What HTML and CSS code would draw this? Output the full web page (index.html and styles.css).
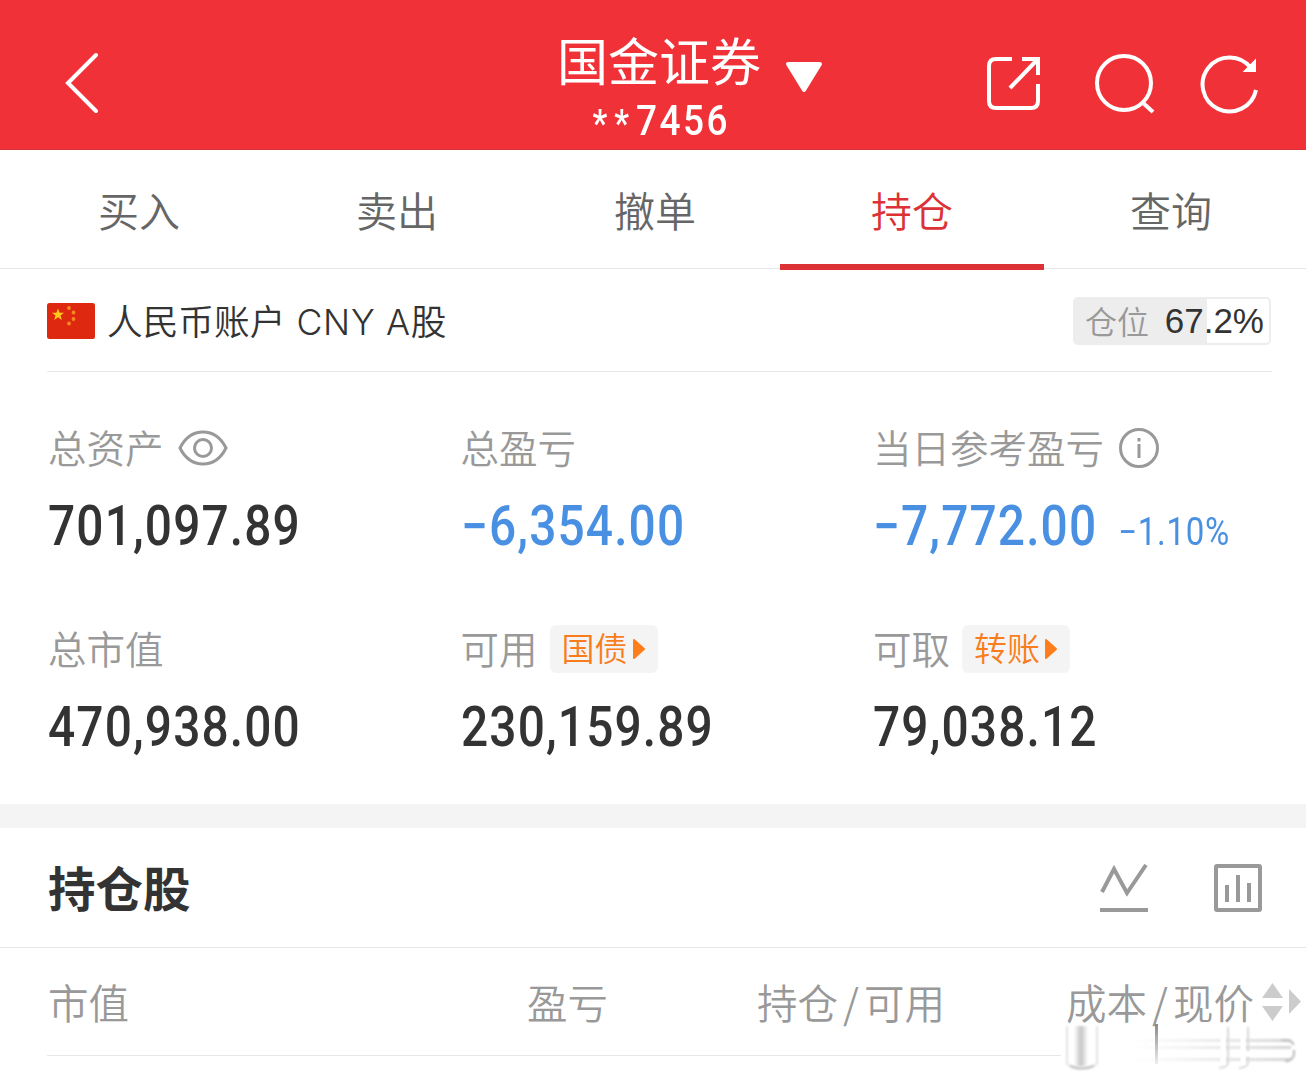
FILE: index.html
```html
<!DOCTYPE html>
<html lang="zh-CN">
<head>
  <meta charset="utf-8">
  <title>持仓</title>
  <link rel="stylesheet" href="styles.css">
</head>
<body>
  <header class="header">
    <svg class="back-icon" width="40" height="64" viewBox="0 0 40 64"><path d="M34 5L6 33L34 61"/></svg>
    <div class="account-switch">
      <div class="account-name">
        <h1>国金证券</h1>
        <p><span class="mask">**</span>7456</p>
      </div>
      <svg class="arrow-down" width="38" height="32" viewBox="0 0 38 32"><path d="M3 2H35L19 28Z"/></svg>
    </div>
    <div class="header-actions">
      <svg width="60" height="60" viewBox="0 0 60 60"><path d="M28 5H12Q5 5 5 12V47Q5 54 12 54H47Q54 54 54 47V30M26 34L52 7M38 5H54V21"/></svg>
      <svg width="64" height="64" viewBox="0 0 64 64"><circle cx="31" cy="31" r="27"/><path d="M49 50L60 60"/></svg>
      <svg width="60" height="62" viewBox="0 0 60 62"><path d="M56 37A27 27 0 1 1 51 15"/><path class="solid" d="M55 8V18H45Z"/></svg>
    </div>
  </header>

  <nav class="tabs">
    <a class="tab">买入</a>
    <a class="tab">卖出</a>
    <a class="tab">撤单</a>
    <a class="tab active">持仓</a>
    <a class="tab">查询</a>
  </nav>

  <section class="account">
    <div class="account-row">
      <svg class="flag" width="48" height="36" viewBox="0 0 48 36">
        <rect width="48" height="36" rx="2.5" fill="#de2910"/>
        <path d="M11 5.500L12.600 9.800H17L13.500 12.500L14.800 17L11 14.300L7.200 17L8.500 12.500L5 9.800H9.400Z" fill="#ffca1c"/>
        <g fill="#f58a20"><circle cx="22" cy="5" r="1.900"/><circle cx="26.500" cy="9.500" r="1.900"/><circle cx="26.500" cy="16" r="1.900"/><circle cx="22" cy="20.500" r="1.900"/></g>
      </svg>
      <span class="account-title">人民币账户 <span class="latin">CNY A</span>股</span>
      <div class="position">
        <span class="position-label">仓位</span>
        <span class="position-value">67.2%</span>
      </div>
    </div>

    <div class="stats">
      <div class="stat">
        <div class="label"><span>总资产</span>
          <svg class="eye" width="50" height="38" viewBox="0 0 50 38"><path d="M2 19C7 9 15 3 25 3S43 9 48 19C43 29 35 35 25 35S7 29 2 19Z"/><circle cx="25" cy="19" r="8.5"/></svg>
        </div>
        <div class="value">701,097.89</div>
      </div>
      <div class="stat">
        <div class="label"><span>总盈亏</span></div>
        <div class="value down">−6,354.00</div>
      </div>
      <div class="stat">
        <div class="label"><span>当日参考盈亏</span>
          <svg class="info" width="42" height="42" viewBox="0 0 42 42"><circle cx="21" cy="21" r="18.5"/><path d="M21 17V31M21 11V14.5"/></svg>
        </div>
        <div class="value down">−7,772.00<small>−1.10%</small></div>
      </div>
      <div class="stat">
        <div class="label"><span>总市值</span></div>
        <div class="value">470,938.00</div>
      </div>
      <div class="stat">
        <div class="label"><span>可用</span>
          <div class="tag"><span>国债</span><svg width="14" height="22" viewBox="0 0 14 22"><path d="M2 2L12 11L2 20Z"/></svg></div>
        </div>
        <div class="value">230,159.89</div>
      </div>
      <div class="stat">
        <div class="label"><span>可取</span>
          <div class="tag"><span>转账</span><svg width="14" height="22" viewBox="0 0 14 22"><path d="M2 2L12 11L2 20Z"/></svg></div>
        </div>
        <div class="value">79,038.12</div>
      </div>
    </div>
  </section>

  <section class="holdings">
    <div class="holdings-title">
      <h2>持仓股</h2>
      <div class="holdings-icons">
        <svg width="50" height="50" viewBox="0 0 50 50"><path d="M3 28L15 5L28 29L47 1M1 46H49"/></svg>
        <svg width="48" height="48" viewBox="0 0 48 48"><rect x="2" y="2" width="44" height="44" rx="1"/><path d="M13 21V38M24 11V38M35 19V38"/></svg>
      </div>
    </div>
    <div class="columns">
      <span>市值</span>
      <span>盈亏</span>
      <span>持仓<i>/</i>可用</span>
      <span class="sortable">成本<i>/</i>现价
        <svg width="40" height="40" viewBox="0 0 40 40"><path d="M1 16L11.500 1L22 16ZM1 24H22L11.500 39ZM28 7L40 19.500L28 32Z"/></svg>
      </span>
    </div>
    <svg class="watermark" width="250" height="60" viewBox="0 0 250 60">
      <defs>
        <linearGradient id="bar"><stop offset="0" stop-color="#fff"/><stop offset=".5" stop-color="#c4c4c4"/><stop offset="1" stop-color="#fff"/></linearGradient>
        <linearGradient id="streak"><stop offset="0" stop-color="#ddd" stop-opacity="0"/><stop offset="1" stop-color="#d4d4d4"/></linearGradient>
        <linearGradient id="fade" x2="0" y2="1"><stop offset="0" stop-color="#888"/><stop offset="1" stop-color="#eee"/></linearGradient>
        <filter id="soft"><feGaussianBlur stdDeviation="1.2"/></filter>
      </defs>
      <rect x="5" y="4" width="245" height="40" fill="#fff"/>
      <g filter="url(#soft)">
        <path d="M11 2V40Q25 49 41 40V2" fill="none" stroke="#e4e4e4" stroke-width="2"/>
        <path d="M14 42Q25 47 38 42" fill="none" stroke="#bbb" stroke-width="2"/>
        <rect x="18" y="2" width="14" height="40" fill="url(#bar)"/>
        <rect x="75" y="15" width="160" height="3" fill="url(#streak)"/>
        <rect x="75" y="22" width="160" height="3" fill="url(#streak)"/>
        <rect x="75" y="34" width="160" height="3" fill="url(#streak)"/>
        <path d="M225 16Q238 16 237 21M229 37Q239 37 238 26" fill="none" stroke="#bbb" stroke-width="2"/>
        <path d="M172 3V39Q170 44 163 44M192 3V39Q190 44 183 44" fill="none" stroke="#d8d8d8" stroke-width="2"/>
      </g>
      <path d="M167 4V41M187 4V41M180 30H231" stroke="#fff" stroke-width="5"/>
      <rect x="99" y="0" width="3" height="40" fill="url(#fade)"/>
    </svg>
  </section>
</body>
</html>
```
FILE: styles.css
```css
* {
  box-sizing: border-box;
}

body {
  margin: 0;
  height: 1083px;
  overflow: hidden;
  background: #fff;
  color: #333;
  font-family: "Noto Sans CJK SC", sans-serif;
}

h1, h2, p {
  margin: 0;
}

svg {
  flex: none;
  fill: none;
  stroke-width: 4;
}

/* header */
.header {
  display: grid;
  grid-template-columns: 557px 1fr auto;
  height: 150px;
  padding-right: 46px;
  background: #f03238;
  border-bottom: 1px solid #d8323a;
  color: #fff;
}

.header svg {
  stroke: #fff;
}

.header .back-icon {
  margin: 50px 0 0 62px;
  stroke-linecap: round;
}

.account-switch {
  display: flex;
}

.account-name {
  width: 204px;
  padding-top: 30px;
  text-align: center;
}

.account-name h1 {
  font-size: 51px;
  font-weight: 400;
  line-height: 58px;
  white-space: nowrap;
}

.account-name p {
  height: 60px;
  padding-left: 5px;
  font-family: Roboto, sans-serif;
  font-size: 42px;
  font-weight: 500;
  line-height: 66px;
  letter-spacing: 2.8px;
  transform: scaleX(0.88);
}

.mask {
  font-size: 38px;
  line-height: 0;
  letter-spacing: 8px;
  vertical-align: -2px;
}

.header .arrow-down {
  margin: 62px 0 0 24px;
  fill: #fff;
  stroke-linejoin: round;
}

.header-actions {
  display: flex;
  align-items: center;
  gap: 43px;
  padding-top: 19px;
}

.header-actions svg:first-child {
  margin-right: 6px;
}

.header-actions .solid {
  fill: #fff;
  stroke-width: 2;
}

/* tabs */
.tabs {
  display: flex;
  height: 119px;
  padding: 0 6px 0 10px;
  border-bottom: 1px solid #e6e6e6;
}

.tab {
  flex: 1;
  height: 120px;
  color: #666;
  font-size: 41px;
  font-weight: 350;
  line-height: 118px;
  text-align: center;
}

.tab.active {
  margin: 0 -2px 0 -4px;
  flex: 0 0 264px;
  border-bottom: 6px solid #dc3236;
  color: #dc3236;
}

/* account summary */
.account {
  height: 559px;
  padding: 0 34px 0 47px;
  border-bottom: 24px solid #f4f4f4;
}

.account-row {
  display: flex;
  align-items: center;
  height: 103px;
  padding: 2px 1px 0 0;
  border-bottom: 1px solid #e8e8e8;
}

.account-title {
  flex: 1;
  margin: -4px 0 0 12px;
  font-size: 35.7px;
  font-weight: 350;
}

.latin {
  margin-left: 3px;
  font-family: Inter, sans-serif;
  letter-spacing: 0.7px;
}

.position {
  display: flex;
  align-items: center;
  justify-content: space-between;
  width: 198px;
  height: 48px;
  padding: 0 5px 0 10px;
  border: 2px solid #ededed;
  border-radius: 5px;
  background: linear-gradient(to right, #ededed 67.8%, #fff 67.8%);
}

.position-label {
  margin-top: -3px;
  color: #999;
  font-size: 32px;
  font-weight: 350;
}

.position-value {
  font-family: "Liberation Sans", sans-serif;
  font-size: 35px;
}

.stats {
  display: grid;
  grid-template-columns: 412.5px 412.5px 1fr;
  grid-auto-rows: 201px;
  padding: 45px 0 0 1px;
}

.label {
  display: flex;
  align-items: center;
  height: 62px;
  color: #999;
  font-size: 38.5px;
  font-weight: 350;
  white-space: nowrap;
}

.label span {
  margin-top: -4px;
}

.label > svg {
  stroke: #999;
  stroke-width: 3;
}

.eye {
  margin-left: 14px;
}

.info {
  margin-left: 14px;
}

/* condensed figures */
.value {
  height: 92px;
  font-family: Roboto, sans-serif;
  font-size: 55px;
  font-weight: 500;
  line-height: 94px;
  letter-spacing: 1.3px;
  white-space: nowrap;
  transform: scaleX(0.87);
  transform-origin: left;
}

.value small {
  margin-left: 24px;
  font-size: 38px;
  font-weight: 400;
  letter-spacing: 0.8px;
}

.down {
  color: #4a90e2;
}

.tag {
  display: flex;
  align-items: center;
  gap: 4px;
  height: 48px;
  margin-left: 12px;
  padding: 0 12px;
  border-radius: 6px;
  background: #f4f4f4;
  color: #f97d1c;
  font-size: 33px;
}

.tag svg {
  fill: #ff7d1a;
  stroke: #ff7d1a;
  stroke-width: 2;
  stroke-linejoin: round;
}

/* holdings */
.holdings {
  position: relative;
}

.holdings-title {
  display: flex;
  align-items: center;
  justify-content: space-between;
  height: 120px;
  padding: 0 44px 0 48px;
  border-bottom: 1px solid #e6e6e6;
}

.holdings-title h2 {
  margin-top: -3px;
  font-size: 47.5px;
  font-weight: 700;
}

.holdings-icons {
  display: flex;
  gap: 65px;
  padding-top: 2px;
}

.holdings-icons svg {
  stroke: #999;
}

.columns {
  display: grid;
  grid-template-columns: 479px 230px 309px 1fr;
  align-items: center;
  height: 108px;
  margin-left: 47px;
  padding: 0 0 1px 1px;
  border-bottom: 1px solid #e8e8e8;
  color: #999;
  font-size: 40.5px;
  font-weight: 350;
  white-space: nowrap;
}

.columns i {
  padding: 0 5px;
  font-style: normal;
}

.sortable {
  display: flex;
  align-items: center;
}

.sortable svg {
  margin: 1px 0 0 7px;
  fill: #ccc;
}

.watermark {
  position: absolute;
  top: 196px;
  right: 0;
}
```
